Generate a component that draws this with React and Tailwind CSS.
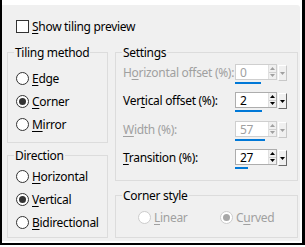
import React from "react";

function Tri({ dir = "down", color = "#000" }) {
  return (
    <svg width="5" height="3" viewBox="0 0 5 3" className="block">
      {dir === "down" ? (
        <polygon points="0,0 5,0 2.5,3" fill={color} />
      ) : (
        <polygon points="0,3 5,3 2.5,0" fill={color} />
      )}
    </svg>
  );
}

function Radio({ checked, disabled }) {
  return (
    <span
      className={
        "w-[13px] h-[13px] rounded-full border flex items-center justify-center shrink-0 " +
        (disabled ? "border-[#cccccc] bg-white" : "border-[#333333] bg-white")
      }
    >
      {checked && (
        <span
          className={
            "w-[7px] h-[7px] rounded-full " + (disabled ? "bg-[#a8a8a8]" : "bg-[#333333]")
          }
        />
      )}
    </span>
  );
}

function Label({ pre = "", u, post = "", disabled }) {
  return (
    <span className={"whitespace-nowrap " + (disabled ? "text-[#a0a0a0]" : "text-black")}>
      {pre}
      <u className="underline-offset-[2px] decoration-1">{u}</u>
      {post}
    </span>
  );
}

function RadioRow({ checked, disabled, children }) {
  return (
    <div className="flex items-center h-[13px] gap-[3px]">
      <Radio checked={checked} disabled={disabled} />
      {children}
    </div>
  );
}

function Spin({ value, disabled, bar }) {
  const c = disabled ? "#a0a0a0" : "#000";
  return (
    <div className="flex flex-col">
      <div className="flex items-start">
        <div
          className={
            "w-[42px] h-[16px] border bg-white flex items-center justify-between " +
            (disabled ? "border-[#cfcfcf]" : "border-[#adadad]")
          }
        >
          <span className={"pl-[4px] " + (disabled ? "text-[#a0a0a0]" : "text-black")}>{value}</span>
          <div className="w-[8px] h-[14px] flex flex-col border-l border-[#e0e0e0]">
            <div className="flex-1 flex items-center justify-center border-b border-[#d0d0d0] bg-[#f0f0f0]">
              <Tri dir="up" color={c} />
            </div>
            <div className="flex-1 flex items-center justify-center bg-[#f0f0f0]">
              <Tri dir="down" color={c} />
            </div>
          </div>
        </div>
        <div
          className={
            "ml-[1px] mt-[1px] w-[9px] h-[16px] bg-[#f0f0f0] border-t border-l border-white border-r border-b flex items-center justify-center " +
            (disabled ? "border-r-[#c8c8c8] border-b-[#c8c8c8]" : "border-r-[#696969] border-b-[#696969]")
          }
        >
          <Tri dir="down" color={c} />
        </div>
      </div>
      <div className="mt-[1px] h-[2px] bg-[#0078d7]" style={{ width: bar }} />
    </div>
  );
}

function SpinRow({ label, value, disabled, bar, mt }) {
  return (
    <div className={"flex items-start " + mt}>
      <div className="w-[112px] h-[16px] flex items-center">{label}</div>
      <Spin value={value} disabled={disabled} bar={bar} />
    </div>
  );
}

export default function App() {
  return (
    <div className="w-[305px] h-[247px] bg-white font-['Noto_Sans',sans-serif] text-[12px] leading-[15px] tracking-[-0.3px] text-black">
      <div className="h-[245px] border-l-2 border-r-[3px] border-b-2 border-black pt-[5px] pr-[2px] pb-[2px] flex">
        <div className="flex-1 bg-[#f0f0f0] rounded-tr-[3px] flex flex-col pl-[5px] pt-[15px]">
          <div className="ml-[9px] h-[13px] flex items-center gap-[3px]">
            <span className="w-[13px] h-[13px] border border-[#333333] bg-white shrink-0" />
            <Label u="S" post="how tiling preview" />
          </div>
          <div className="mt-[12px] flex gap-[7px]">
            <div className="w-[101px] flex flex-col gap-[5px]">
              <fieldset className="h-[98px] border border-[#dcdcdc]">
                <legend className="ml-[6px] px-[1px]">Tiling method</legend>
                <div className="pl-[8px] pt-[12px] flex flex-col gap-[10px]">
                  <RadioRow><Label u="E" post="dge" /></RadioRow>
                  <RadioRow checked><Label u="C" post="orner" /></RadioRow>
                  <RadioRow><Label u="M" post="irror" /></RadioRow>
                </div>
              </fieldset>
              <fieldset className="h-[90px] border border-[#dcdcdc]">
                <legend className="ml-[6px] px-[1px]">Direction</legend>
                <div className="pl-[8px] pt-[7px] flex flex-col gap-[10px]">
                  <RadioRow><Label u="H" post="orizontal" /></RadioRow>
                  <RadioRow checked><Label u="V" post="ertical" /></RadioRow>
                  <RadioRow><Label u="B" post="idirectional" /></RadioRow>
                </div>
              </fieldset>
            </div>
            <div className="w-[183px] flex flex-col gap-[7px]">
              <fieldset className="h-[136px] border border-[#dcdcdc]">
                <legend className="ml-[6px] px-[1px]">Settings</legend>
                <div className="pl-[7px] pt-[4px] flex flex-col">
                  <SpinRow
                    mt=""
                    disabled
                    value="0"
                    bar={26}
                    label={<Label pre="H" u="o" post="rizontal offset (%):" disabled />}
                  />
                  <SpinRow
                    mt="mt-[8px]"
                    value="2"
                    bar={27}
                    label={<Label pre="Ver" u="t" post="ical offset (%):" />}
                  />
                  <SpinRow
                    mt="mt-[9px]"
                    disabled
                    value="57"
                    bar={30}
                    label={<Label u="W" post="idth (%):" disabled />}
                  />
                  <SpinRow
                    mt="mt-[8px]"
                    value="27"
                    bar={13}
                    label={<Label u="T" post="ransition (%):" />}
                  />
                </div>
              </fieldset>
              <fieldset className="h-[50px] border border-[#dcdcdc]">
                <legend className="ml-[6px] px-[1px]">Corner style</legend>
                <div className="pl-[22px] pt-[8px] flex">
                  <div className="w-[82px]">
                    <RadioRow disabled><Label u="L" post="inear" disabled /></RadioRow>
                  </div>
                  <RadioRow disabled checked><Label pre="C" u="u" post="rved" disabled /></RadioRow>
                </div>
              </fieldset>
            </div>
          </div>
        </div>
      </div>
    </div>
  );
}
